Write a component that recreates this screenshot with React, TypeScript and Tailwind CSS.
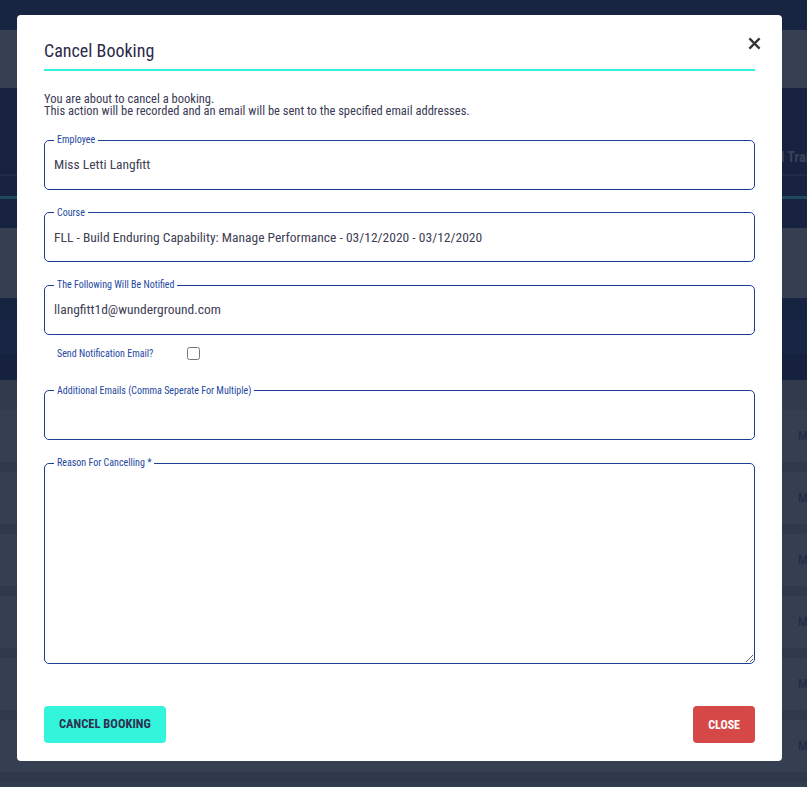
import React from "react";

const font = { fontFamily: '"Roboto Condensed", "Liberation Sans Narrow", Roboto, "Noto Sans", sans-serif' };

const rows = [0, 1, 2, 3, 4, 5];

function Field({
  label,
  value,
}: {
  label: string;
  value?: string;
}) {
  return (
    <fieldset className="rounded-[5px] border border-[#1d3f8f] px-[9px] pb-[14.5px] pt-[8px]">
      <legend className="px-[3px] text-[10px] leading-[12px] text-[#2447a0]">{label}</legend>
      <div className="h-5 text-[13.5px] leading-5 text-[#404055]">{value}</div>
    </fieldset>
  );
}

export default function App() {
  return (
    <div className="relative flex h-[787px] w-[807px] flex-col overflow-hidden bg-[#16223f]" style={font}>
      {/* page behind the backdrop */}
      <div className="h-[30px] bg-[#172442]" />
      <div className="h-[58px] bg-[#373f52]" />
      <div className="flex h-[86px] items-center bg-[#16223f] pl-[781px] pt-[52px]">
        <span className="whitespace-nowrap text-[14px] font-bold text-[#3a4258]">l Training</span>
      </div>
      <div className="h-[2px] bg-[#1f2b47]" />
      <div className="h-[20px] bg-[#16223f]" />
      <div className="h-[3px] bg-[#1e4a5c]" />
      <div className="h-[29px] bg-[#16223f]" />
      <div className="h-[70px] bg-[#363e51]" />
      <div className="h-[22px] bg-[#172441]" />
      <div className="h-[34px] bg-[#182544]" />
      <div className="h-[26px] bg-[#16213f]" />
      <div className="h-[30px] bg-[#323a4d]" />
      {rows.map((r) => (
        <div key={r} className="flex flex-col">
          <div className="flex h-[52px] items-center bg-[#363e51] pl-[798px]">
            <span className="text-[13px] text-[#1e2a45]">Mr</span>
          </div>
          <div className="h-[10px] bg-[#30384b]" />
        </div>
      ))}
      <div className="flex-1 bg-[#343c4f]" />

      {/* modal */}
      <div className="absolute left-[17px] top-[15px] flex h-[746px] w-[765px] flex-col rounded-[4px] bg-white px-[27px]">
        <div className="relative flex h-[56px] items-end border-b-2 border-[#34f2d8] pb-[6px]">
          <h2 className="text-[18px] leading-6 text-[#2d2a4a]">Cancel Booking</h2>
          <button className="absolute right-[-8px] top-[19px] flex h-[18px] w-[18px] items-center justify-center text-[#333]">
            <svg viewBox="0 0 14 14" className="h-[13px] w-[13px]">
              <path d="M1.5 1.5 L12.5 12.5 M12.5 1.5 L1.5 12.5" stroke="currentColor" strokeWidth="2.4" />
            </svg>
          </button>
        </div>

        <p className="mt-[22px] text-[12.5px] leading-[12px] text-[#3a3a55]">
          You are about to cancel a booking.
          <br />
          This action will be recorded and an email will be sent to the specified email addresses.
        </p>

        <div className="mt-[17px] flex flex-col gap-[17px]">
          <Field label="Employee" value="Miss Letti Langfitt" />
          <Field
            label="Course"
            value="FLL - Build Enduring Capability: Manage Performance - 03/12/2020 - 03/12/2020"
          />
          <Field label="The Following Will Be Notified" value="llangfitt1d@wunderground.com" />
        </div>

        <label className="mt-[11px] flex items-center pl-[13px] text-[10px] text-[#2447a0]">
          <span className="w-[130px]">Send Notification Email?</span>
          <input type="checkbox" className="h-[13px] w-[13px]" />
        </label>

        <div className="mt-[24px] flex flex-col gap-[17px]">
          <Field label="Additional Emails (Comma Seperate For Multiple)" />
          <fieldset className="rounded-[5px] border border-[#1d3f8f] px-[9px]">
            <legend className="px-[3px] text-[10px] leading-[12px] text-[#2447a0]">
              Reason For Cancelling *
            </legend>
            <textarea className="-mx-[9px] block h-[194px] w-[calc(100%+18px)] resize-y rounded-[5px] px-[9px] outline-none" />
          </fieldset>
        </div>

        <div className="mb-[18px] mt-auto flex items-center justify-between">
          <button className="h-[37px] rounded-[4px] bg-[#33f5dc] px-[15px] text-[12.5px] font-bold uppercase text-[#2d3050]">
            Cancel Booking
          </button>
          <button className="h-[37px] rounded-[4px] bg-[#d64848] px-[15px] text-[12px] font-bold uppercase text-white">
            Close
          </button>
        </div>
      </div>
    </div>
  );
}
